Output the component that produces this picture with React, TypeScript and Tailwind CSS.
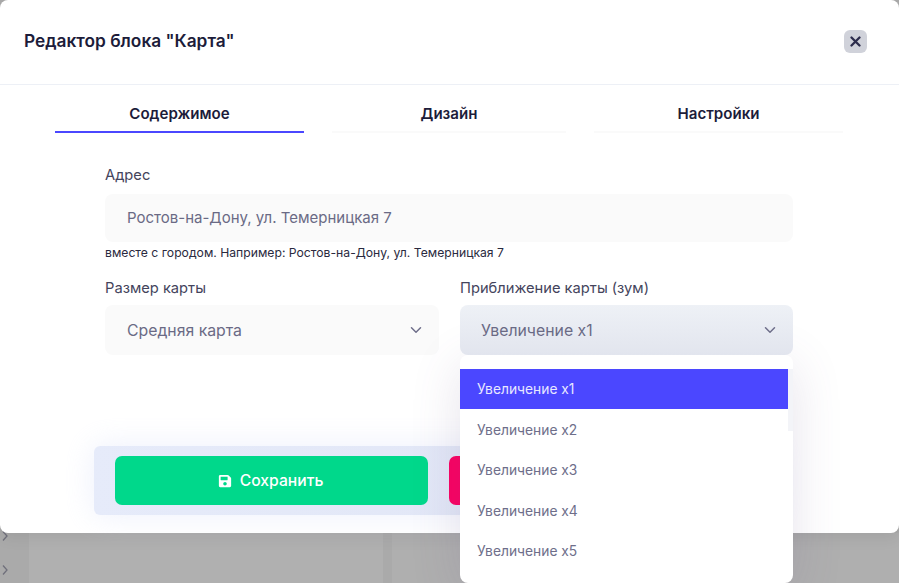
import React from "react";

const Chevron = () => (
  <svg width="14" height="14" viewBox="0 0 14 14" fill="none" stroke="#6e6e8a" strokeWidth="1.5" strokeLinecap="round" strokeLinejoin="round">
    <path d="M2.5 4.8 7 9.2l4.5-4.4" />
  </svg>
);

const Save = () => (
  <svg width="14" height="14" viewBox="0 0 448 512" fill="#fff">
    <path d="M433.9 129.9l-83.9-83.9A48 48 0 0 0 316.1 32H48C21.5 32 0 53.5 0 80v352c0 26.5 21.5 48 48 48h352c26.5 0 48-21.5 48-48V163.9a48 48 0 0 0-14.1-33.9zM224 416c-35.3 0-64-28.7-64-64s28.7-64 64-64 64 28.7 64 64-28.7 64-64 64zm96-304.5V212c0 6.6-5.4 12-12 12H76c-6.6 0-12-5.4-12-12V108c0-6.6 5.4-12 12-12h228.5c3.2 0 6.2 1.3 8.5 3.5l3.5 3.5c2.3 2.3 3.5 5.3 3.5 8.5z" />
  </svg>
);

const Small = () => (
  <svg width="8" height="12" viewBox="0 0 8 12" fill="none" stroke="#70707c" strokeWidth="1.3">
    <path d="M3 1.5 7 6l-4 4.5" />
  </svg>
);

const items = ["Увеличение x1", "Увеличение x2", "Увеличение x3", "Увеличение x4", "Увеличение x5"];

export default function App() {
  return (
    <div className="relative w-[899px] h-[583px] overflow-hidden bg-[#aaaaaa] font-['Inter','Noto_Sans',sans-serif]">
      <div className="flex h-[50px] absolute left-0 right-0 bottom-0 gap-[9px] pl-[29px]">
        <div className="w-[354px] bg-[#b0b0b0]" />
        <div className="flex-1 bg-[#afafaf]" />
      </div>
      <div className="absolute left-0 top-[530px] flex flex-col gap-[22px]">
        <Small />
        <Small />
      </div>

      <div className="relative h-[533px] bg-white rounded-[8px] flex flex-col shadow-[0_4px_16px_rgba(0,0,0,0.08)]">
        <div className="h-[85px] shrink-0 border-b border-[#edf0f6] flex items-center justify-between pl-[24px] pr-[32px] pb-[2px]">
          <h2 className="text-[17.3px] font-semibold text-[#1c1c3a]">Редактор блока "Карта"</h2>
          <button className="w-[23px] h-[23px] rounded-[6px] bg-[#d0d2da] flex items-center justify-center">
            <svg width="11" height="11" viewBox="0 0 11 11" stroke="#2c2c4c" strokeWidth="2.3" strokeLinecap="round">
              <path d="M1.5 1.5l8 8M9.5 1.5l-8 8" />
            </svg>
          </button>
        </div>

        <div className="flex pl-[55px] gap-[28px] mt-[18px]">
          {["Содержимое", "Дизайн", "Настройки"].map((t, i) => (
            <div
              key={t}
              className={`h-[30px] text-center text-[15.1px] font-semibold text-[#1c1c3a] border-b-2 leading-[22px] ${i === 0 ? "w-[249px] border-[#4b47ff]" : i === 1 ? "w-[234px] border-[#fafafa]" : "w-[249px] border-[#fafafa]"}`}
            >
              {t}
            </div>
          ))}
        </div>

        <div className="ml-[105px] w-[688px] mt-[32px]">
          <label className="block text-[14.7px] leading-[20px] text-[#44445c]">Адрес</label>
          <div className="mt-[9px] h-[48px] rounded-[8px] bg-[#fafafa] flex items-center px-[22px] text-[15px] text-[#6a6a85]">
            Ростов-на-Дону, ул. Темерницкая 7
          </div>
          <p className="mt-[3px] text-[12.2px] leading-[16px] text-[#2a2a40]">вместе с городом. Например: Ростов-на-Дону, ул. Темерницкая 7</p>

          <div className="flex gap-[21px] mt-[17px]">
            <div className="w-[334px]">
              <label className="block text-[14.7px] leading-[20px] text-[#44445c]">Размер карты</label>
              <div className="mt-[7px] h-[50px] rounded-[8px] bg-[#fafafa] flex items-center justify-between pl-[22px] pr-[16px] text-[15.8px] text-[#6a6a85]">
                <span className="pt-[1px]">Средняя карта</span>
                <Chevron />
              </div>
            </div>
            <div className="w-[333px]">
              <label className="block text-[14.7px] leading-[20px] text-[#44445c]">Приближение карты (зум)</label>
              <div className="relative z-10 mt-[7px] h-[50px] rounded-[8px] bg-gradient-to-b from-[#eef1f6] to-[#e2e5ee] flex items-center justify-between pl-[21px] pr-[16px] text-[15.8px] text-[#6a6a85]">
                <span className="pt-[1px]">Увеличение x1</span>
                <Chevron />
              </div>
            </div>
          </div>
        </div>

        <div className="absolute left-[94px] top-[446px] w-[680px] h-[69px] rounded-[6px] bg-gradient-to-r from-[#e6ebfa] to-[#dfe4f4] flex gap-[21px] pl-[21px] pt-[10px] shadow-[0_0_30px_rgba(225,230,250,0.6)]">
          <button className="w-[313px] h-[49px] rounded-[7px] bg-[#00d88b] text-white text-[15.7px] font-medium flex items-center justify-center gap-[8px] pr-[2px]">
            <Save />
            Сохранить
          </button>
          <button className="w-[300px] h-[49px] rounded-[7px] bg-[#fb0062]" />
        </div>
      </div>

      <div className="absolute left-[460px] top-[355px] w-[333px] h-[228px] rounded-[8px] bg-white pt-[14px] shadow-[0_10px_50px_rgba(100,80,130,0.16)]">
        <div className="absolute right-0 top-[14px] w-[5px] h-[62px] bg-[#f3f4f8]" />
        <div className="relative w-[328px]">
          {items.map((t, i) => (
            <div
              key={t}
              className={`h-[40.4px] flex items-center pl-[17px] pt-[1px] text-[13.8px] ${i === 0 ? "bg-[#4b47ff] text-[#e8e8ff]" : "bg-white text-[#6e6e8a]"}`}
            >
              {t}
            </div>
          ))}
        </div>
      </div>
    </div>
  );
}
